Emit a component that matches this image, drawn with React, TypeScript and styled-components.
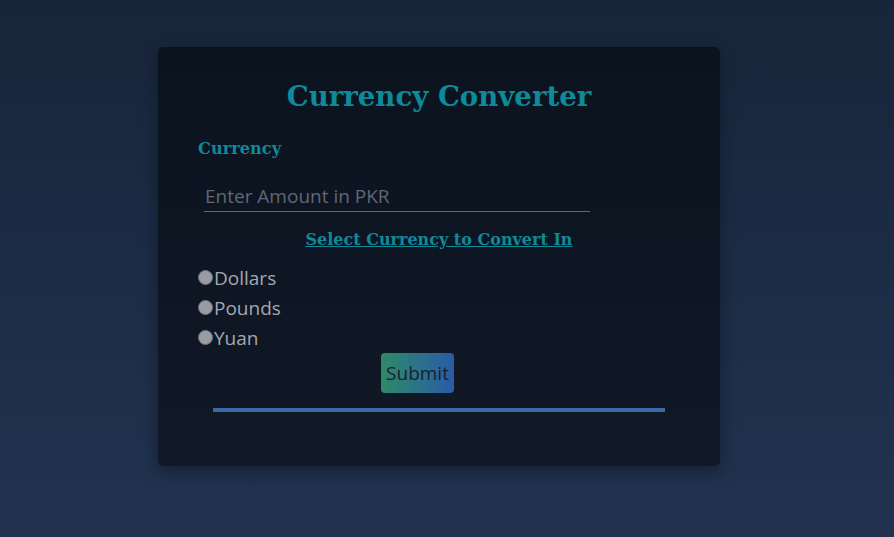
import React from "react";
import styled, { createGlobalStyle } from "styled-components";

const Global = createGlobalStyle`
  html, body { margin: 0; padding: 0; }
  body {
    min-height: 537px;
    background: linear-gradient(180deg, #18253a 0%, #213350 100%);
    font-family: "Open Sans", "Noto Sans", sans-serif;
  }
`;

const Page = styled.div`
  min-height: 537px;
  padding-top: 47px;
  padding-left: 158px;
  box-sizing: border-box;
`;

const Card = styled.form`
  width: 562px;
  height: 419px;
  box-sizing: border-box;
  padding: 30px 40px 0 40px;
  border-radius: 5px;
  background: linear-gradient(180deg, #0b131e 0%, #111827 100%);
  box-shadow: 0 6px 16px rgba(8, 14, 24, 0.45);
  display: flex;
  flex-direction: column;
`;

const Title = styled.h1`
  margin: 0;
  text-align: center;
  font-family: "DejaVu Serif", Georgia, serif;
  font-weight: bold;
  font-size: 27.6px;
  line-height: 40px;
  color: #0e8a9a;
`;

const Label = styled.label`
  margin-top: 20px;
  font-family: "DejaVu Serif", Georgia, serif;
  font-weight: bold;
  font-size: 16.2px;
  line-height: 24px;
  color: #0e8a9a;
`;

const AmountInput = styled.input`
  margin: 19px 0 0 6px;
  width: 386px;
  height: 32px;
  box-sizing: border-box;
  background: transparent;
  border: none;
  border-bottom: 1px solid #2a7f8a;
  outline: none;
  padding: 0 0 0 1px;
  font-family: "Open Sans", "Noto Sans", sans-serif;
  font-size: 19px;
  color: #c0c6ce;
  &::placeholder { color: #5f6875; }
`;

const SubHeading = styled.div`
  margin-top: 16px;
  text-align: center;
  font-family: "DejaVu Serif", Georgia, serif;
  font-weight: bold;
  font-size: 16px;
  line-height: 24px;
  color: #0e8a9a;
  text-decoration: underline;
`;

const Options = styled.div`
  margin-top: 11px;
  display: flex;
  flex-direction: column;
`;

const Option = styled.label`
  display: flex;
  align-items: center;
  height: 30px;
  font-family: "Open Sans", "Noto Sans", sans-serif;
  font-size: 19px;
  color: #a3a8b2;
`;

const RadioDot = styled.input.attrs({ type: "radio" })`
  appearance: none;
  margin: 0 1px 0 0;
  width: 15px;
  height: 15px;
  border-radius: 50%;
  background: #9a9ca4;
  border: 1px solid #6f737c;
  box-sizing: border-box;
  transform: translateY(-1px);
`;

const SubmitButton = styled.button`
  margin: 0 0 0 183px;
  width: 73px;
  height: 40px;
  border: none;
  border-radius: 4px;
  background: linear-gradient(90deg, #2d8a68 0%, #2a5ba8 100%);
  color: #17212e;
  font-family: "Open Sans", "Noto Sans", sans-serif;
  font-size: 19px;
  padding: 0;
  align-self: flex-start;
`;

const Divider = styled.div`
  margin: 15px 0 0 15px;
  width: 452px;
  height: 4px;
  background: #3d68a6;
`;

export default function App() {
  const options = ["Dollars", "Pounds", "Yuan"];
  return (
    <>
      <Global />
      <Page>
        <Card onSubmit={(e) => e.preventDefault()}>
          <Title>Currency Converter</Title>
          <Label>Currency</Label>
          <AmountInput placeholder="Enter Amount in PKR" />
          <SubHeading>Select Currency to Convert In</SubHeading>
          <Options>
            {options.map((o) => (
              <Option key={o}>
                <RadioDot name="cur" value={o} />
                {o}
              </Option>
            ))}
          </Options>
          <SubmitButton type="submit">Submit</SubmitButton>
          <Divider />
        </Card>
      </Page>
    </>
  );
}
